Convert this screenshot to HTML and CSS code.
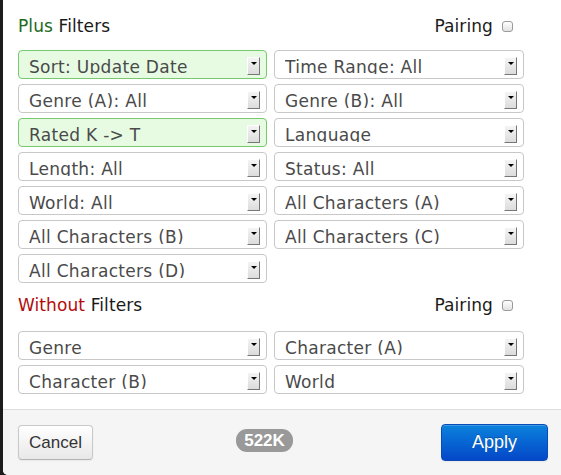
FILE: index.html
```html
<!DOCTYPE html>
<html>
<head>
<meta charset="utf-8">
<link rel="stylesheet" href="styles.css">
</head>
<body>
<div class="modal">
  <div class="modal-body">
    <div class="sec-head">
      <div class="sec-title"><span class="plus">Plus</span> Filters</div>
      <label class="pairing">Pairing <span class="cb"></span></label>
    </div>
    <div class="grid">
      <div class="sel on"><span class="sel-text">Sort: Update Date</span><span class="arr"></span></div>
      <div class="sel"><span class="sel-text">Time Range: All</span><span class="arr"></span></div>
      <div class="sel"><span class="sel-text">Genre (A): All</span><span class="arr"></span></div>
      <div class="sel"><span class="sel-text">Genre (B): All</span><span class="arr"></span></div>
      <div class="sel on"><span class="sel-text">Rated K -&gt; T</span><span class="arr"></span></div>
      <div class="sel"><span class="sel-text">Language</span><span class="arr"></span></div>
      <div class="sel"><span class="sel-text">Length: All</span><span class="arr"></span></div>
      <div class="sel"><span class="sel-text">Status: All</span><span class="arr"></span></div>
      <div class="sel"><span class="sel-text">World: All</span><span class="arr"></span></div>
      <div class="sel"><span class="sel-text">All Characters (A)</span><span class="arr"></span></div>
      <div class="sel"><span class="sel-text">All Characters (B)</span><span class="arr"></span></div>
      <div class="sel"><span class="sel-text">All Characters (C)</span><span class="arr"></span></div>
      <div class="sel"><span class="sel-text">All Characters (D)</span><span class="arr"></span></div>
    </div>
    <div class="sec-head second">
      <div class="sec-title"><span class="without">Without</span> Filters</div>
      <label class="pairing">Pairing <span class="cb"></span></label>
    </div>
    <div class="grid">
      <div class="sel"><span class="sel-text">Genre</span><span class="arr"></span></div>
      <div class="sel"><span class="sel-text">Character (A)</span><span class="arr"></span></div>
      <div class="sel"><span class="sel-text">Character (B)</span><span class="arr"></span></div>
      <div class="sel"><span class="sel-text">World</span><span class="arr"></span></div>
    </div>
  </div>
  <div class="modal-footer">
    <button class="btn">Cancel</button>
    <span class="badge">522K</span>
    <button class="btn primary">Apply</button>
  </div>
</div>
</body>
</html>
```
FILE: styles.css
```css
html, body {
  margin: 0;
  padding: 0;
  height: 100%;
}
body {
  background: #1c1c1c;
  overflow: hidden;
}
.modal {
  margin-left: 3px;
  height: 475px;
  background: #fff;
  display: flex;
  flex-direction: column;
  border-bottom-left-radius: 5px;
  overflow: hidden;
}
.modal-body {
  flex: 1;
  padding: 16px 37px 0 15px;
}
.sec-head {
  display: flex;
  justify-content: space-between;
  align-items: center;
  height: 20px;
  margin-bottom: 14px;
  font-family: "DejaVu Sans", Verdana, sans-serif;
  font-size: 17px;
  letter-spacing: 0.1px;
  color: #1a1a1a;
}
.sec-head.second {
  margin-top: 12px;
  margin-bottom: 16px;
}
.plus { color: #1d6b1d; }
.without { color: #b30b0b; }
.pairing {
  display: flex;
  align-items: center;
  margin-right: 11px;
}
.cb {
  display: inline-block;
  width: 9px;
  height: 9px;
  margin-left: 9px;
  border: 1px solid #9a9a9a;
  border-radius: 3px;
  background: linear-gradient(#ffffff, #e2e2e2);
}
.grid {
  display: grid;
  grid-template-columns: 249px 250px;
  column-gap: 7px;
  row-gap: 5px;
}
.sel {
  height: 27px;
  border: 1px solid #c8c8c8;
  border-radius: 4px;
  background: #fff;
  display: flex;
  align-items: flex-start;
  padding: 0 6px 0 10px;
  font-family: "DejaVu Sans", Verdana, sans-serif;
  font-size: 17px;
  letter-spacing: 0.3px;
  color: #4a4a4a;
}
.sel.on {
  background: #e7fbe3;
  border-color: #76c96c;
}
.sel-text {
  flex: 1;
  height: 23px;
  line-height: 33px;
  overflow: hidden;
  white-space: nowrap;
}
.arr {
  width: 13px;
  height: 18px;
  margin-top: 6px;
  box-sizing: border-box;
  background: linear-gradient(#f4f4f4, #dcdcdc);
  border-right: 1px solid #777;
  border-bottom: 1px solid #777;
  border-top: 1px solid #fff;
  border-left: 1px solid #fff;
  position: relative;
}
.arr::after {
  content: "";
  position: absolute;
  left: 3px;
  top: 4px;
  border-left: 3px solid transparent;
  border-right: 3px solid transparent;
  border-top: 3px solid #000;
}
.modal-footer {
  height: 65px;
  border-top: 1px solid #dedede;
  background: #f5f5f5;
  display: flex;
  align-items: center;
  justify-content: space-between;
  padding: 0 13px 0 15px;
}
.btn {
  font-family: "Liberation Sans", Arial, sans-serif;
  font-size: 17px;
  color: #333;
  height: 35px;
  width: 75px;
  padding: 0;
  border: 1px solid #c9c9c9;
  border-bottom-color: #b3b3b3;
  border-radius: 4px;
  background: linear-gradient(#ffffff, #e8e8e8);
  box-shadow: inset 0 1px 0 rgba(255,255,255,.2), 0 1px 2px rgba(0,0,0,.05);
}
.btn.primary {
  width: 107px;
  height: 37px;
  font-size: 18px;
  color: #fff;
  border: 1px solid #0a4bb8;
  background: linear-gradient(#0a82dc, #0447c8);
  text-shadow: 0 -1px 0 rgba(0,0,0,.25);
}
.badge {
  font-family: "Liberation Sans", Arial, sans-serif;
  font-weight: bold;
  font-size: 17px;
  color: #fff;
  background: #999;
  border-radius: 11px;
  width: 57px;
  height: 23px;
  line-height: 23px;
  text-align: center;
  margin-bottom: 4px;
  margin-right: 5px;
}
```
